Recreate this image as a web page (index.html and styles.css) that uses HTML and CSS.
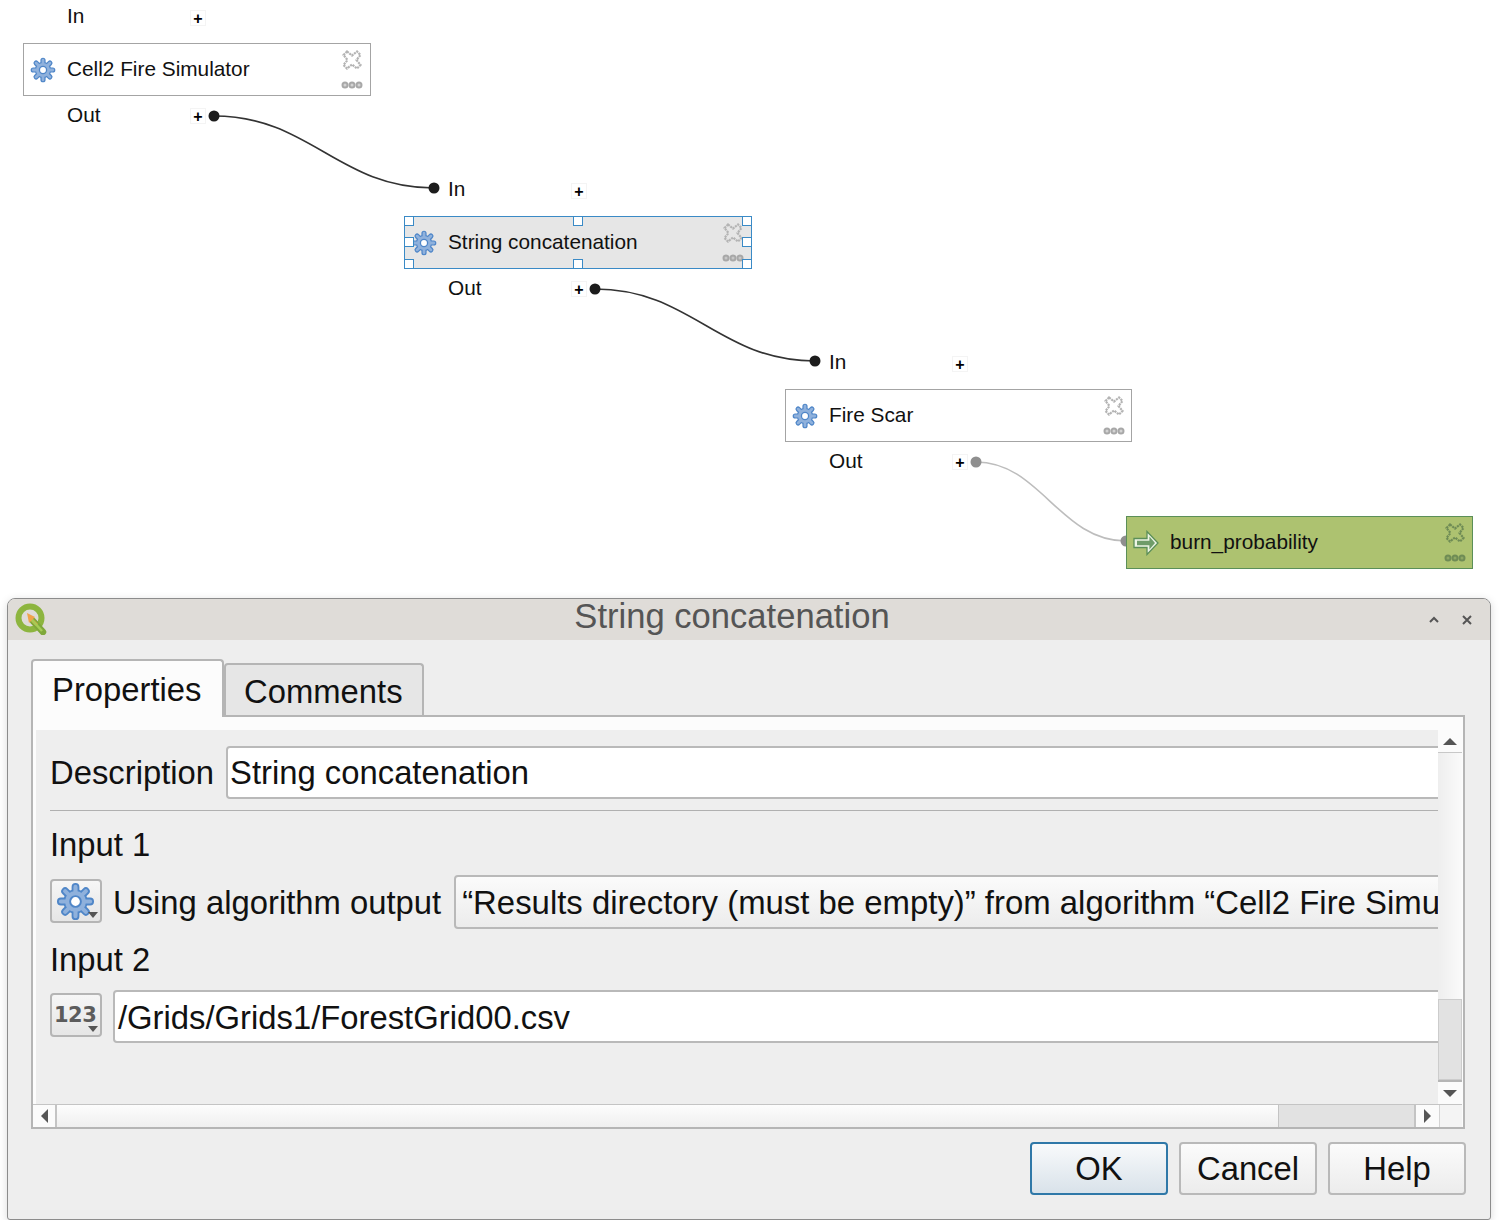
FILE: index.html
```html
<!DOCTYPE html>
<html>
    <head>
        <title>String concatenation</title>
        <link rel="stylesheet" href="styles.css">
    </head>
    <body>
        <svg class="defs" width="0" height="0">
            <defs>
                <symbol id="gear" viewBox="0 0 32 32">
                    <g stroke="#4f86c8" stroke-width="6.4" stroke-linecap="round">
                        <path d="M16 4V28M4 16H28M7.5 7.5L24.5 24.5M24.5 7.5L7.5 24.5"/>
                    </g>
                    <circle cx="16" cy="16" r="10" fill="#4f86c8"/>
                    <g stroke="#8fb1dc" stroke-width="3.4" stroke-linecap="round">
                        <path d="M16 4V28M4 16H28M7.5 7.5L24.5 24.5M24.5 7.5L7.5 24.5"/>
                    </g>
                    <circle cx="16" cy="16" r="8.6" fill="#8fb1dc"/>
                    <circle cx="16" cy="16" r="4.4" fill="#fff" stroke="#4f86c8" stroke-width="1.6"/>
                </symbol>
                <symbol id="cross" viewBox="0 0 20 20">
                    <path d="M5 1.5L10 5.5L15 1.5L18.5 5L14.5 10L18.5 15L15 18.5L10 14.5L5 18.5L1.5 15L5.5 10L1.5 5Z" fill="none" stroke="currentColor" stroke-width="2.2" stroke-dasharray="2.2 0.8"/>
                </symbol>
                <symbol id="dots" viewBox="0 0 22 8">
                    <circle cx="4" cy="4" r="2.5" fill="currentColor" fill-opacity="0.5" stroke="currentColor" stroke-width="2"/>
                    <circle cx="11" cy="4" r="2.5" fill="currentColor" fill-opacity="0.5" stroke="currentColor" stroke-width="2"/>
                    <circle cx="18" cy="4" r="2.5" fill="currentColor" fill-opacity="0.5" stroke="currentColor" stroke-width="2"/>
                </symbol>
            </defs>
        </svg>

        <div class="canvas">
            <svg class="links" width="1500" height="598">
                <path d="M214 116C310 116 338 188 434 188" class="link"/>
                <path d="M595 289C691 289 719 361 815 361" class="link"/>
                <path d="M976 462C1040 462 1060 541 1126 541" class="link link-muted"/>
                <circle cx="214" cy="116" r="5.5" fill="#1c1c1c"/>
                <circle cx="434" cy="188" r="5.5" fill="#1c1c1c"/>
                <circle cx="595" cy="289" r="5.5" fill="#1c1c1c"/>
                <circle cx="815" cy="361" r="5.5" fill="#1c1c1c"/>
                <circle cx="976" cy="462" r="5.5" fill="#8f8f8f"/>
                <circle cx="1126" cy="541" r="5.5" fill="#8f8f8f"/>
            </svg>

            <div class="item item-sim">
                <div class="port"><span class="port-name">In</span><span class="plus">+</span></div>
                <div class="box">
                    <svg class="box-icon"><use href="#gear"/></svg>
                    <span class="box-title">Cell2 Fire Simulator</span>
                    <svg class="box-cross"><use href="#cross"/></svg>
                    <svg class="box-dots"><use href="#dots"/></svg>
                </div>
                <div class="port port-out"><span class="port-name">Out</span><span class="plus">+</span></div>
            </div>

            <div class="item item-concat">
                <div class="port"><span class="port-name">In</span><span class="plus">+</span></div>
                <div class="box box-selected">
                    <svg class="box-icon"><use href="#gear"/></svg>
                    <span class="box-title">String concatenation</span>
                    <svg class="box-cross"><use href="#cross"/></svg>
                    <svg class="box-dots"><use href="#dots"/></svg>
                    <i class="grip grip-tl"></i><i class="grip grip-tc"></i><i class="grip grip-tr"></i>
                    <i class="grip grip-ml"></i><i class="grip grip-mr"></i>
                    <i class="grip grip-bl"></i><i class="grip grip-bc"></i><i class="grip grip-br"></i>
                </div>
                <div class="port port-out"><span class="port-name">Out</span><span class="plus">+</span></div>
            </div>

            <div class="item item-scar">
                <div class="port"><span class="port-name">In</span><span class="plus">+</span></div>
                <div class="box box-narrow">
                    <svg class="box-icon"><use href="#gear"/></svg>
                    <span class="box-title">Fire Scar</span>
                    <svg class="box-cross"><use href="#cross"/></svg>
                    <svg class="box-dots"><use href="#dots"/></svg>
                </div>
                <div class="port port-out"><span class="port-name">Out</span><span class="plus">+</span></div>
            </div>

            <div class="box box-narrow box-output">
                <svg class="box-icon" viewBox="0 0 26 26">
                    <path d="M1 8.5H14V1.5L25 13L14 24.5V17.5H1Z" fill="#eef5e6" stroke="#5b8f58" stroke-width="1.3"/>
                    <path d="M4 10.8H16.4V6.6L22 13L16.4 19.4V15.2H4Z" fill="#6f9c69"/>
                </svg>
                <span class="box-title">burn_probability</span>
                <svg class="box-cross"><use href="#cross"/></svg>
                <svg class="box-dots"><use href="#dots"/></svg>
            </div>
        </div>

        <div class="dialog">
            <div class="titlebar">
                <svg class="logo" viewBox="0 0 32 32">
                    <circle cx="15" cy="15" r="11.5" fill="none" stroke="#8db53f" stroke-width="6"/>
                    <path d="M18 18L28 29" stroke="#7fa83a" stroke-width="6.5" stroke-linecap="round"/>
                    <path d="M12 10L20 14L18 16L23 21L21 23L16 18L14 20Z" fill="#f0a34a"/>
                    <path d="M17 17L27 28" stroke="#a5cc55" stroke-width="2.5"/>
                </svg>
                <span class="titlebar-text">String concatenation</span>
                <svg class="win-btn win-up" viewBox="0 0 12 12"><path d="M2 8L6 4L10 8" fill="none" stroke="#555" stroke-width="2"/></svg>
                <svg class="win-btn win-close" viewBox="0 0 12 12"><path d="M2 2L10 10M10 2L2 10" fill="none" stroke="#555" stroke-width="2"/></svg>
            </div>

            <div class="dialog-body">
                <div class="tabs">
                    <div class="tab tab-active">Properties</div>
                    <div class="tab">Comments</div>
                </div>

                <div class="panel">
                    <div class="scroll-wrap">
                        <div class="scroll-area">
                            <div class="row row-desc">
                                <span class="lbl">Description</span>
                                <div class="field field-desc">String concatenation</div>
                            </div>
                            <div class="rule"></div>
                            <div class="lbl heading">Input 1</div>
                            <div class="row row-algo">
                                <div class="tool">
                                    <svg class="tool-gear"><use href="#gear"/></svg>
                                    <i class="tool-arrow"></i>
                                </div>
                                <span class="lbl">Using algorithm output</span>
                                <div class="field field-combo">“Results directory (must be empty)” from algorithm “Cell2 Fire Simulator”</div>
                            </div>
                            <div class="lbl heading heading-2">Input 2</div>
                            <div class="row row-value">
                                <div class="tool">
                                    <span class="tool-num">123</span>
                                    <i class="tool-arrow"></i>
                                </div>
                                <div class="field">/Grids/Grids1/ForestGrid00.csv</div>
                            </div>
                        </div>
                        <div class="vbar">
                            <div class="sb-btn"><i class="tri tri-up"></i></div>
                            <div class="vbar-handle"></div>
                            <div class="vbar-track"></div>
                            <div class="sb-btn sb-btn-down"><i class="tri tri-down"></i></div>
                        </div>
                    </div>
                    <div class="hbar">
                        <div class="hbar-btn hbar-left"><i class="tri tri-left"></i></div>
                        <div class="hbar-handle"></div>
                        <div class="hbar-track"></div>
                        <div class="hbar-btn hbar-right"><i class="tri tri-right"></i></div>
                        <div class="corner"></div>
                    </div>
                </div>

                <div class="buttons">
                    <div class="btn btn-default">OK</div>
                    <div class="btn">Cancel</div>
                    <div class="btn">Help</div>
                </div>
            </div>
        </div>
    </body>
</html>
```

FILE: styles.css
```css
html, body {
    margin: 0;
    background-color: #fff;
    font-family: "Liberation Sans", Arial, sans-serif;
    color: #111;
}
.defs {
    position: absolute;
}

/* model canvas */
.canvas {
    position: relative;
    height: 598px;
    font-size: 20.8px;
}
.links {
    position: absolute;
    left: 0;
    top: 0;
}
.link {
    fill: none;
    stroke: #333;
    stroke-width: 1.6;
}
.link-muted {
    stroke: #bdbdbd;
}
.item {
    position: absolute;
    width: 348px;
}
.item-sim {
    left: 23px;
    top: 4px;
}
.item-concat {
    left: 404px;
    top: 177px;
}
.item-scar {
    left: 785px;
    top: 350px;
}
.port {
    display: flex;
    align-items: center;
    height: 24px;
    margin-bottom: 15px;
    padding-left: 44px;
}
.port-out {
    margin: 8px 0 0;
}
.port-name {
    width: 123px;
}
.port-out .port-name {
    margin-top: -2px;
}
.plus {
    width: 16px;
    height: 16px;
    line-height: 15px;
    margin-top: 3px;
    text-align: center;
    font-size: 16px;
    font-weight: bold;
    color: #000;
    background-color: #fff;
    border: 1px solid #f4f4f4;
    box-sizing: border-box;
}
.port-out .plus {
    margin-top: 0;
}
.box {
    position: relative;
    display: flex;
    align-items: center;
    box-sizing: border-box;
    width: 348px;
    height: 53px;
    background-color: #fff;
    border: 1px solid #a4a4a4;
}
.box-narrow {
    width: 347px;
}
.box-icon {
    width: 26px;
    height: 26px;
    margin-left: 6px;
}
.box-title {
    margin-left: 11px;
    margin-top: -2px;
    white-space: nowrap;
}
.box-cross {
    position: absolute;
    right: 8px;
    top: 6px;
    width: 20px;
    height: 20px;
    color: #b4b4b4;
}
.box-dots {
    position: absolute;
    right: 7px;
    top: 37px;
    width: 22px;
    height: 8px;
    color: #a8a8a8;
}
.box-narrow .box-cross {
    right: 7px;
}
.box-narrow .box-dots {
    right: 6px;
}
.box-selected {
    background-color: #e6e6e6;
    border-color: #3a8ac6;
}
.box-output {
    position: absolute;
    left: 1126px;
    top: 516px;
    background-color: #adc270;
    border-color: #5b8f58;
}
.box-output .box-cross,
.box-output .box-dots {
    color: #6f8c55;
}
.grip {
    position: absolute;
    width: 8px;
    height: 8px;
    background-color: #fff;
    border: 1px solid #3a8ac6;
}
.grip-tl { left: -1px; top: -1px; }
.grip-tc { left: 168px; top: -1px; }
.grip-tr { right: -1px; top: -1px; }
.grip-ml { left: -1px; top: 20px; }
.grip-mr { right: -1px; top: 20px; }
.grip-bl { left: -1px; bottom: -1px; }
.grip-bc { left: 168px; bottom: -1px; }
.grip-br { right: -1px; bottom: -1px; }

/* dialog */
.dialog {
    box-sizing: border-box;
    width: 1484px;
    height: 622px;
    margin-left: 7px;
    background-color: #eee;
    border: 1px solid #8c8c8c;
    border-radius: 8px 8px 3px 3px;
    box-shadow: 0 2px 8px rgba(0, 0, 0, 0.15);
    overflow: hidden;
}
.titlebar {
    position: relative;
    height: 41px;
    padding-right: 34px;
    background-color: #dfdcd8;
    text-align: center;
}
.logo {
    position: absolute;
    left: 6px;
    top: 4px;
    width: 34px;
    height: 32px;
}
.titlebar-text {
    display: inline-block;
    font-size: 34.6px;
    line-height: 34px;
    color: #555;
}
.win-btn {
    position: absolute;
    top: 15px;
    width: 12px;
    height: 12px;
}
.win-up {
    right: 50px;
}
.win-close {
    right: 17px;
}
.dialog-body {
    padding: 19px 25px 0 23px;
    font-size: 32.8px;
}
.tabs {
    display: flex;
    align-items: flex-end;
    height: 56px;
}
.tab {
    box-sizing: border-box;
    height: 52px;
    width: 200px;
    padding: 8px 0 0 18px;
    background-color: #e6e6e6;
    border: 2px solid #b5b5b5;
    border-bottom: 0;
    border-radius: 4px 4px 0 0;
}
.tab-active {
    position: relative;
    height: 58px;
    width: 193px;
    margin-bottom: -2px;
    padding: 10px 0 0 19px;
    background-color: #fcfcfc;
    z-index: 1;
}
.panel {
    box-sizing: border-box;
    width: 1434px;
    height: 414px;
    padding: 13px 1px 0 3px;
    background-color: #fcfcfc;
    border: 2px solid #b5b5b5;
    display: flex;
    flex-direction: column;
}
.scroll-wrap {
    display: flex;
    flex: none;
    height: 374px;
}
.scroll-area {
    box-sizing: border-box;
    width: 1403px;
    padding: 16px 0 0 14px;
    background-color: #eee;
    overflow: hidden;
}
.row {
    display: flex;
    align-items: center;
    white-space: nowrap;
}
.row-desc {
    height: 53px;
}
.lbl {
    line-height: 38px;
}
.field {
    box-sizing: border-box;
    flex: none;
    width: 1400px;
    height: 53px;
    line-height: 50px;
    padding-left: 4px;
    background-color: #fff;
    border: 2px solid #b9b9b9;
    border-radius: 4px;
}
.field-desc {
    margin-left: 12px;
    padding-left: 2px;
}
.field-combo {
    height: 54px;
    margin-left: 13px;
    padding-left: 6px;
    line-height: 52px;
    font-size: 32.9px;
    background: linear-gradient(#fbfbfb, #ececec);
}
.rule {
    height: 1px;
    margin-top: 11px;
    background-color: #b0b0b0;
}
.heading {
    margin-top: 15px;
}
.heading-2 {
    margin-top: 12px;
}
.row-algo {
    height: 54px;
    margin-top: 11px;
}
.row-algo .lbl {
    margin-top: 2px;
}
.row-value {
    height: 53px;
    margin-top: 11px;
}
.row-value .field {
    margin-left: 11px;
    padding-left: 3px;
    line-height: 52px;
}
.tool {
    position: relative;
    flex: none;
    box-sizing: border-box;
    width: 52px;
    height: 44px;
    margin: 0 11px 2px 0;
    background: linear-gradient(#f6f6f6, #e6e6e6);
    border: 2px solid #b5b5b5;
    border-radius: 4px;
}
.row-value .tool {
    margin: 0 0 4px;
}
.tool-gear {
    position: absolute;
    left: 4px;
    top: 1px;
    width: 39px;
    height: 39px;
}
.tool-num {
    position: absolute;
    left: 2px;
    top: 6px;
    line-height: 28px;
    font-weight: bold;
    font-family: "DejaVu Sans", sans-serif;
    font-size: 21px;
    letter-spacing: -0.5px;
    color: #5c5c5c;
}
.tool-arrow {
    position: absolute;
    right: 2px;
    bottom: 3px;
    border-left: 5px solid transparent;
    border-right: 5px solid transparent;
    border-top: 6px solid #555;
}

/* scroll bars */
.vbar {
    display: flex;
    flex-direction: column;
    width: 24px;
}
.sb-btn {
    display: flex;
    align-items: center;
    justify-content: center;
    height: 22px;
    background-color: #fbfbfb;
    border-bottom: 1px solid #c8c8c8;
}
.sb-btn-down {
    border-top: 2px solid #b5b5b5;
    border-bottom: 0;
}
.vbar-handle {
    flex: none;
    height: 246px;
    background: linear-gradient(90deg, #eee, #fafafa);
}
.vbar-track {
    flex: 1;
    background-color: #e2e2e2;
    border: 1px solid #ccc;
}
.hbar {
    display: flex;
    height: 23px;
    border-top: 1px solid #c4c4c4;
    margin-left: -3px;
    background-color: #fbfbfb;
}
.hbar-btn {
    display: flex;
    align-items: center;
    justify-content: center;
    box-sizing: border-box;
    width: 24px;
}
.hbar-left {
    border-right: 2px solid #c4c4c4;
}
.hbar-right {
    width: 25px;
    border-left: 2px solid #c4c4c4;
}
.hbar-handle {
    width: 1221px;
    background: linear-gradient(#fdfdfd, #efefef);
}
.hbar-track {
    width: 136px;
    background-color: #e2e2e2;
    border-left: 1px solid #c4c4c4;
    box-sizing: border-box;
}
.corner {
    flex: 1;
    background-color: #f4f4f4;
    border-left: 1px solid #d4d4d4;
}
.tri {
    width: 0;
    height: 0;
}
.tri-up {
    border-left: 7px solid transparent;
    border-right: 7px solid transparent;
    border-bottom: 7px solid #555;
}
.tri-down {
    border-left: 7px solid transparent;
    border-right: 7px solid transparent;
    border-top: 7px solid #555;
}
.tri-left {
    border-top: 7px solid transparent;
    border-bottom: 7px solid transparent;
    border-right: 7px solid #555;
}
.tri-right {
    border-top: 7px solid transparent;
    border-bottom: 7px solid transparent;
    border-left: 7px solid #555;
}

/* buttons */
.buttons {
    display: flex;
    justify-content: flex-end;
    gap: 11px;
    width: 1435px;
    margin-top: 13px;
}
.btn {
    box-sizing: border-box;
    width: 138px;
    height: 53px;
    line-height: 50px;
    text-align: center;
    background: linear-gradient(#fbfbfb, #ececec);
    border: 2px solid #b9b9b9;
    border-radius: 4px;
}
.btn-default {
    background: linear-gradient(#f8fafb, #d9e2ea);
    border-color: #2f78a8;
}
```
